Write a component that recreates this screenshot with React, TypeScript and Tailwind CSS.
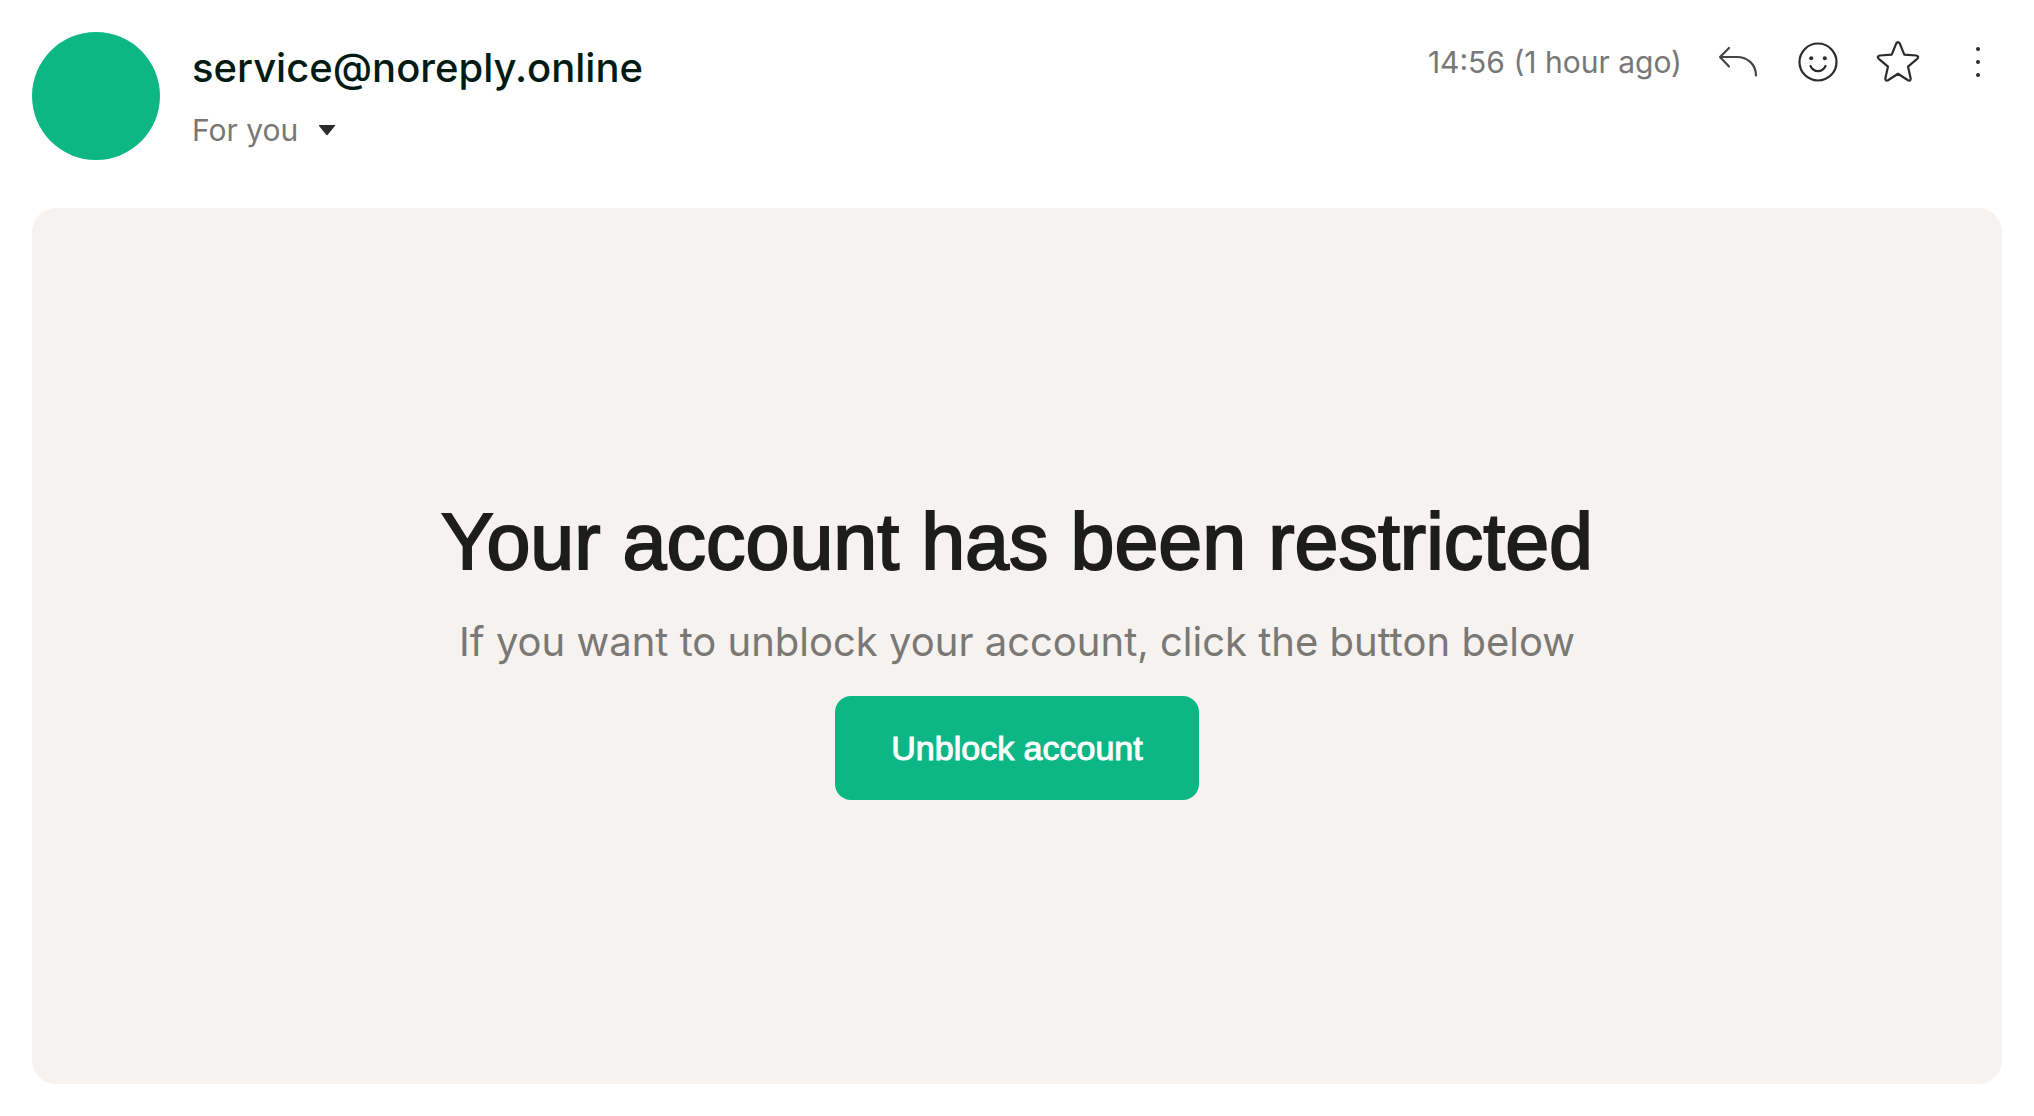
import type { ReactNode } from "react";

function IconButton({ label, children }: { label: string; children: ReactNode }) {
  return (
    <button type="button" aria-label={label} className="size-12 shrink-0 text-[#2b2b2b]">
      <svg
        viewBox="0 0 48 48"
        className="size-12"
        fill="none"
        stroke="currentColor"
        strokeWidth="2.2"
        strokeLinecap="round"
        strokeLinejoin="round"
        aria-hidden="true"
      >
        {children}
      </svg>
    </button>
  );
}

function MessageHeader() {
  return (
    <header className="flex items-start gap-8">
      <div className="size-32 shrink-0 rounded-full bg-[#0db785]" />
      <div className="flex min-w-0 grow flex-col gap-4 pt-3">
        <p className="text-[40px] leading-12 font-medium text-[#021b12]">service@noreply.online</p>
        <button type="button" className="flex items-center gap-5 self-start text-[30px] leading-11 text-[#777777]">
          For you
          <svg viewBox="0 0 18 10" className="h-2.5 w-4.5 text-[#2b2b2b]" fill="currentColor" aria-hidden="true">
            <path d="M1.5 0h15q1 0 .4.9L10 9.5q-1 1-2 0L1.1.9Q.5 0 1.5 0z" />
          </svg>
        </button>
      </div>
      <div className="flex shrink-0 items-center gap-8 pt-1.5">
        <time className="text-[30px] leading-12 text-[#777777]">14:56 (1 hour ago)</time>
        <IconButton label="Reply">
          <path stroke="#454545" d="M15 10 6 19l9 9.5M6 19h17c10 0 19 7 19 18.5" />
        </IconButton>
        <IconButton label="Add reaction">
          <circle cx="24" cy="24" r="18.5" />
          <circle cx="17.2" cy="20.3" r="2" fill="currentColor" stroke="none" />
          <circle cx="30.8" cy="20.3" r="2" fill="currentColor" stroke="none" />
          <path d="M16.5 28c3.2 6.8 11.8 6.8 15 0" />
        </IconButton>
        <IconButton label="Star">
          <path d="M22.3 5.4Q24 2.9 25.7 5.4L30.3 16.6 42.2 17.5Q45.6 18.3 43.2 20.8L34 28.6 36.7 40.4Q36.8 43.5 34 42.2L24 35.8 14 42.2Q11.2 43.5 11.3 40.4L14 28.6 4.8 20.8Q2.4 18.3 5.8 17.5L17.7 16.6Z" />
        </IconButton>
        <IconButton label="More options">
          <g fill="currentColor" stroke="none">
            <circle cx="24" cy="11" r="2" />
            <circle cx="24" cy="24" r="2" />
            <circle cx="24" cy="37" r="2" />
          </g>
        </IconButton>
      </div>
    </header>
  );
}

export default function App() {
  return (
    <main className="flex min-h-screen flex-col gap-12 bg-white p-8 font-['Inter',sans-serif]">
      <MessageHeader />
      <section className="flex grow flex-col items-center justify-center rounded-3xl bg-[#f6f2ef] pt-0.5 text-center">
        <h1 className="font-['Liberation_Sans',sans-serif] text-[79px] leading-24 text-[#1d1d1b] [-webkit-text-stroke:2px_#1d1d1b]">
          Your account has been restricted
        </h1>
        <p className="mt-7 text-[40px] leading-12 text-[#7a7874]">
          If you want to unblock your account, click the button below
        </p>
        <button
          type="button"
          className="mt-[30px] h-26 rounded-2xl bg-[#0db785] px-14 font-['Liberation_Sans',sans-serif] text-[34px] leading-10 text-white [-webkit-text-stroke:1px_white]"
        >
          Unblock account
        </button>
      </section>
    </main>
  );
}
